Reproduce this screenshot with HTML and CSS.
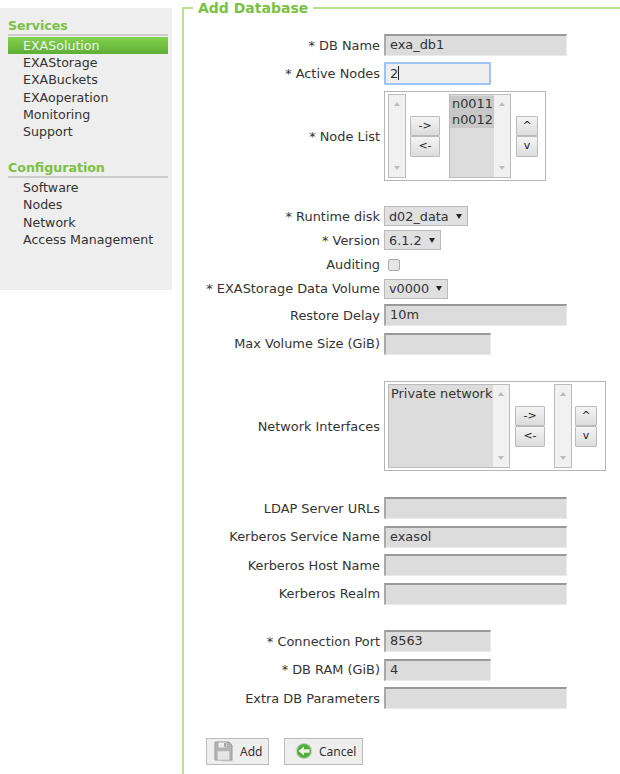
FILE: index.html
```html
<!DOCTYPE html>
<html lang="en">
<head>
<meta charset="utf-8">
<title>Add Database</title>
<link rel="stylesheet" href="styles.css">
</head>
<body>
<div class="page">
  <nav class="side">
    <h2 class="side-head">Services</h2>
    <ul class="side-list">
      <li class="side-item active">EXASolution</li>
      <li class="side-item">EXAStorage</li>
      <li class="side-item">EXABuckets</li>
      <li class="side-item">EXAoperation</li>
      <li class="side-item">Monitoring</li>
      <li class="side-item">Support</li>
    </ul>
    <h2 class="side-head second">Configuration</h2>
    <ul class="side-list">
      <li class="side-item">Software</li>
      <li class="side-item">Nodes</li>
      <li class="side-item">Network</li>
      <li class="side-item">Access Management</li>
    </ul>
  </nav>
  <fieldset class="panel">
    <legend class="panel-title">Add Database</legend>
    <div class="form">
      <div class="row"><span class="lab">* DB Name</span><span class="inp wide">exa_db1</span></div>
      <div class="row"><span class="lab">* Active Nodes</span><span class="inp narrow focus">2<i class="caret"></i></span></div>
      <div class="row r-box"><span class="lab">* Node List</span>
        <div class="box nodes">
          <div class="list empty"><div class="sb"><b class="up"></b><b class="down"></b></div></div>
          <div class="btns b-arrows"><span class="btn">-&gt;</span><span class="btn">&lt;-</span></div>
          <div class="list picks"><div class="opts"><div class="opt sel">n0011</div><div class="opt sel">n0012</div></div><div class="sb"><b class="up"></b><b class="down"></b></div></div>
          <div class="btns b-order"><span class="btn">^</span><span class="btn">v</span></div>
        </div>
      </div>
      <div class="row r-sel1"><span class="lab">* Runtime disk</span><span class="sel-box">d02_data<b class="tri"></b></span></div>
      <div class="row r-sel"><span class="lab">* Version</span><span class="sel-box">6.1.2<b class="tri"></b></span></div>
      <div class="row r-sel"><span class="lab">Auditing</span><span class="check"></span></div>
      <div class="row r-sel"><span class="lab">* EXAStorage Data Volume</span><span class="sel-box">v0000<b class="tri"></b></span></div>
      <div class="row"><span class="lab">Restore Delay</span><span class="inp wide">10m</span></div>
      <div class="row"><span class="lab">Max Volume Size (GiB)</span><span class="inp narrow"></span></div>
      <div class="row r-box r-net"><span class="lab">Network Interfaces</span>
        <div class="box nets">
          <div class="list picks net"><div class="opts"><div class="opt">Private network</div></div><div class="sb"><b class="up"></b><b class="down"></b></div></div>
          <div class="btns b-arrows"><span class="btn">-&gt;</span><span class="btn">&lt;-</span></div>
          <div class="list empty"><div class="sb"><b class="up"></b><b class="down"></b></div></div>
          <div class="btns b-order"><span class="btn">^</span><span class="btn">v</span></div>
        </div>
      </div>
      <div class="row r-ldap"><span class="lab">LDAP Server URLs</span><span class="inp wide"></span></div>
      <div class="row"><span class="lab">Kerberos Service Name</span><span class="inp wide">exasol</span></div>
      <div class="row"><span class="lab">Kerberos Host Name</span><span class="inp wide"></span></div>
      <div class="row"><span class="lab">Kerberos Realm</span><span class="inp wide"></span></div>
      <div class="row r-port"><span class="lab">* Connection Port</span><span class="inp narrow">8563</span></div>
      <div class="row"><span class="lab">* DB RAM (GiB)</span><span class="inp narrow">4</span></div>
      <div class="row"><span class="lab">Extra DB Parameters</span><span class="inp wide"></span></div>
    </div>
    <div class="actions">
      <span class="action add">
        <svg class="ico" width="23" height="23" viewBox="0 0 23 23"><path d="M7 19h11l4 3H9z" fill="#dedede"/><path d="M2 2h14l3 3v15H2z" fill="#b4b4b4" stroke="#9a9a9a"/><path d="M5 2h9v6H5z" fill="#ececec" stroke="#a5a5a5" stroke-width=".7"/><path d="M11 3h2v4h-2z" fill="#a8a8a8"/><path d="M4.500 11h12v9h-12z" fill="#e6e6e6" stroke="#bdbdbd" stroke-width=".6"/></svg>
        Add
      </span>
      <span class="action cancel">
        <svg class="ico" width="18" height="18" viewBox="0 0 18 18"><circle cx="9" cy="9" r="8.300" fill="#c9d4c4"/><circle cx="9" cy="9" r="7" fill="#4fae3c"/><path d="M3.500 9l5.500-4.500v2.800h5.500v3.400H9v2.800z" fill="#f1f3e6"/></svg>
        Cancel
      </span>
    </div>
  </fieldset>
</div>
</body>
</html>
```
FILE: styles.css
```css
* { box-sizing: border-box; }
html, body { margin: 0; padding: 0; background: #fff; }
body { font-family: "DejaVu Sans", Verdana, sans-serif; font-size: 12.900px; color: #333; height: 774px; overflow: hidden; }
.page { display: flex; align-items: flex-start; }

.side { width: 172px; height: 282px; margin-top: 8px; background: #eee; padding: 10px 4px 0 8px; flex: none; font-size: 12.600px; }
.side-head { margin: 0; font-size: 12.600px; line-height: 15px; font-weight: bold; color: #7ac143; border-bottom: 2px solid #ccc; padding-bottom: 1px; height: 18px; }
.side-head.second { margin-top: 20px; }
.side-list { list-style: none; margin: 1px 0 0; padding: 0; }
.side-item { height: 17.200px; line-height: 17px; padding-left: 15px; }
.side-item.active { color: #f2f2f2; background: linear-gradient(#84d24e, #5fae35); }

.panel { flex: none; width: 438px; height: 800px; margin: 0 0 0 10px; padding: 0; border: 0; border-top: 2px solid #b9e08c; border-left: 2px solid #bfe093; }
.panel-title { margin: 0 0 0 9px; padding: 0 5px; font-size: 14px; line-height: 16px; font-weight: bold; color: #7ac143; }

.form { display: flex; flex-direction: column; padding-top: 15px; }
.row { display: flex; align-items: center; height: 28.500px; gap: 4px; }
.lab { width: 196px; flex: none; text-align: right; white-space: nowrap; }
.inp { display: block; height: 22px; line-height: 18px; padding-left: 4px; background: #dcdcdc; border-top: 2px solid #999; border-left: 2px solid #aaa; border-right: 1px solid #eaeaea; border-bottom: 1px solid #eaeaea; }
.inp.wide { width: 183px; }
.inp.narrow { width: 107px; }
.inp.focus { height: 23px; line-height: 19px; background: #eee; border: 2px solid #9cc4f4; border-radius: 1px; }
.caret { display: inline-block; width: 1px; height: 14px; background: #222; vertical-align: -2px; }

.r-box { height: 90px; margin: 3px 0; }
.box { height: 90px; border: 1px solid #b5b5b5; display: flex; padding: 2px 3px; background: #fff; }
.nodes { width: 162px; }
.nets { width: 222px; }
.list { display: flex; height: 84px; border: 1px solid #bbb; background: #dcdcdc; flex: none; }
.list.empty { width: 18px; }
.picks { width: 62px; }
.net { width: 122px; }
.opts { flex: 1; min-width: 0; padding-top: 1px; }
.opt { line-height: 16px; padding-left: 2px; white-space: nowrap; }
.opt.sel { background: #c8c8c8; }
.sb { width: 16px; flex: none; background: #f1f1f1; display: flex; flex-direction: column; justify-content: space-between; align-items: center; padding: 7px 0; margin-left: auto; }
.up { width: 0; height: 0; border: 3.500px solid transparent; border-top: 0; border-bottom: 4px solid #bbb; }
.down { width: 0; height: 0; border: 3.500px solid transparent; border-bottom: 0; border-top: 4px solid #bbb; }

.btns { display: flex; flex-direction: column; justify-content: center; flex: none; }
.btn { display: block; height: 20.500px; line-height: 18px; text-align: center; font-size: 11px; background: linear-gradient(#f4f4f4, #dcdcdc); border: 1px solid #bbb; border-radius: 1px; color: #222; }
.nodes .b-arrows { margin: 0 9px 0 4px; width: 30px; }
.nets .b-arrows { margin: 0 9px 0 5px; width: 30px; }
.b-order { width: 22px; }
.nodes .b-order { margin-left: 5px; }
.nets .b-order { margin-left: 3px; }

.r-sel1 { margin-top: 20px; height: 24px; }
.r-sel { height: 24.400px; }
.sel-box { display: flex; align-items: center; height: 20px; padding: 0 5px 0 4px; gap: 7px; background: #e0e0e0; border: 1px solid #bbb; color: #333; font-size: 12.800px; }
.tri { width: 0; height: 0; border: 3px solid transparent; border-bottom: 0; border-top: 5px solid #222; }
.check { display: block; width: 12px; height: 12px; margin-left: 4px; border: 1px solid #aaa; border-radius: 2px; background: #e6e6e6; }

.r-net { margin: 23px 0 0; }
.r-ldap { margin-top: 23px; }
.r-port { margin-top: 19px; }

.actions { display: flex; gap: 15px; margin: 25px 0 0 22px; font-family: "Noto Sans", sans-serif; font-size: 12px; color: #333; }
.action { display: flex; align-items: center; gap: 4px; height: 27px; background: #eee; border: 1px solid #bbb; }
.add { width: 63px; padding-left: 6px; }
.cancel { width: 79px; padding-left: 10px; gap: 6px; }
.ico { flex: none; }
```
